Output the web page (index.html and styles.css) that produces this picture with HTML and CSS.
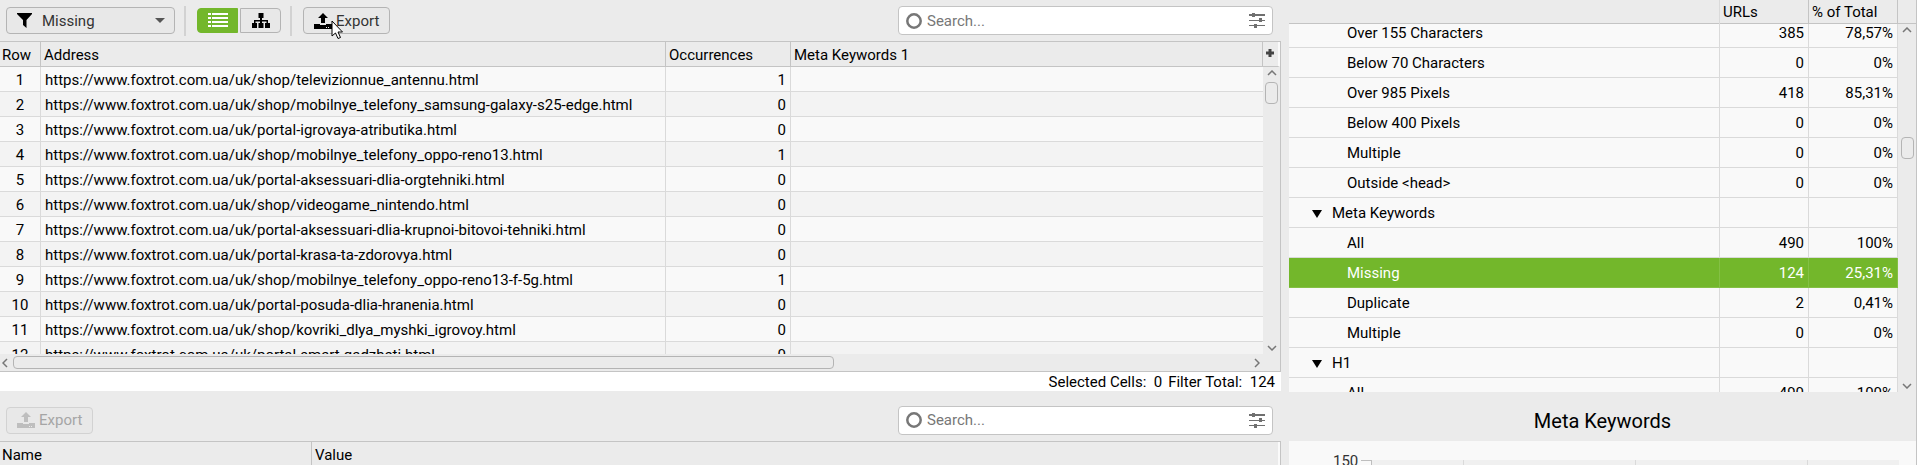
FILE: index.html
```html
<!DOCTYPE html>
<html lang="en">
<head>
    <meta charset="UTF-8">
    <meta name="viewport" content="width=device-width, initial-scale=1.0">
    <title>Meta Keywords</title>
    <link rel="stylesheet" href="styles.css">
</head>
<body>
    <svg class="symbols" aria-hidden="true">
        <symbol id="icon-export" viewBox="0 0 18 16">
            <path d="M9 0l5 5h-3v5H7V5H4z"/>
            <path d="M0 11h6v1h6v-1h6v5H0z"/>
            <path class="dot" d="M12 14h1v1h-1zM14 14h1v1h-1z"/>
        </symbol>
        <symbol id="icon-ring" viewBox="0 0 16 16">
            <circle cx="8" cy="8" r="6.700" fill="none" stroke="#777" stroke-width="2.500"/>
        </symbol>
        <symbol id="icon-sliders" viewBox="0 0 16 15">
            <path d="M0 1h16v2H0zM0 7h16v1H0zM0 12h16v1H0z"/>
            <path d="M3 0h3v4H3zM10 5h3v4h-3zM5 11h3v4H5z"/>
        </symbol>
        <symbol id="icon-chevron" viewBox="0 0 10 6">
            <path d="M1 5l4-4 4 4" fill="none" stroke="#777" stroke-width="1.500"/>
        </symbol>
    </svg>

    <main class="left">
        <div class="toolbar">
            <button type="button" class="filter">
                <svg width="15" height="15" viewBox="0 0 15 15"><path d="M0 0h15v1l-5.500 6v8L6 12V7L0 1z"/></svg>
                <span>Missing</span>
                <i class="caret"></i>
            </button>
            <span class="divider"></span>
            <div class="views">
                <button type="button" class="view active" aria-label="List view">
                    <svg width="20" height="15" viewBox="0 0 20 15"><path fill="#fff" d="M0 0h3v2H0zM4 0h16v2H4zM0 4h3v2H0zM4 4h16v2H4zM0 8h3v2H0zM4 8h16v2H4zM0 12h3v2H0zM4 12h16v2H4z"/></svg>
                </button>
                <button type="button" class="view" aria-label="Tree view">
                    <svg width="18" height="15" viewBox="0 0 18 15"><path d="M6.500 0h5v5H10v2h6v3h2v5h-5v-5h1.500V8.500H10V10h1.500v5h-5v-5H8V8.500H3.500V10H5v5H0v-5h2V7h6V5H6.500z"/></svg>
                </button>
            </div>
            <span class="divider"></span>
            <button type="button" class="export">
                <svg width="18" height="16"><use href="#icon-export"/></svg>
                <span>Export</span>
                <svg class="cursor" width="13" height="20" viewBox="0 0 13 20"><path d="M1 1v15l3.500-3 2.500 5.500 2.500-1L7 12h4.500z" fill="#fff" stroke="#000"/></svg>
            </button>
            <label class="search">
                <svg width="16" height="16"><use href="#icon-ring"/></svg>
                <input type="text" placeholder="Search..." aria-label="Search URLs">
                <svg width="16" height="15"><use href="#icon-sliders"/></svg>
            </label>
        </div>

        <section class="grid">
            <div class="grid-body">
                <table class="urls">
                    <colgroup><col class="c-row"><col class="c-address"><col class="c-occ"><col></colgroup>
                    <thead>
                        <tr><th>Row</th><th>Address</th><th>Occurrences</th><th>Meta Keywords 1</th></tr>
                    </thead>
                    <tbody>
                        <tr><td>1</td><td>https://www.foxtrot.com.ua/uk/shop/televizionnue_antennu.html</td><td>1</td><td></td></tr>
                        <tr><td>2</td><td>https://www.foxtrot.com.ua/uk/shop/mobilnye_telefony_samsung-galaxy-s25-edge.html</td><td>0</td><td></td></tr>
                        <tr><td>3</td><td>https://www.foxtrot.com.ua/uk/portal-igrovaya-atributika.html</td><td>0</td><td></td></tr>
                        <tr><td>4</td><td>https://www.foxtrot.com.ua/uk/shop/mobilnye_telefony_oppo-reno13.html</td><td>1</td><td></td></tr>
                        <tr><td>5</td><td>https://www.foxtrot.com.ua/uk/portal-aksessuari-dlia-orgtehniki.html</td><td>0</td><td></td></tr>
                        <tr><td>6</td><td>https://www.foxtrot.com.ua/uk/shop/videogame_nintendo.html</td><td>0</td><td></td></tr>
                        <tr><td>7</td><td>https://www.foxtrot.com.ua/uk/portal-aksessuari-dlia-krupnoi-bitovoi-tehniki.html</td><td>0</td><td></td></tr>
                        <tr><td>8</td><td>https://www.foxtrot.com.ua/uk/portal-krasa-ta-zdorovya.html</td><td>0</td><td></td></tr>
                        <tr><td>9</td><td>https://www.foxtrot.com.ua/uk/shop/mobilnye_telefony_oppo-reno13-f-5g.html</td><td>1</td><td></td></tr>
                        <tr><td>10</td><td>https://www.foxtrot.com.ua/uk/portal-posuda-dlia-hranenia.html</td><td>0</td><td></td></tr>
                        <tr><td>11</td><td>https://www.foxtrot.com.ua/uk/shop/kovriki_dlya_myshki_igrovoy.html</td><td>0</td><td></td></tr>
                        <tr><td>12</td><td>https://www.foxtrot.com.ua/uk/portal-smart-gadzheti.html</td><td>0</td><td></td></tr>
                    </tbody>
                </table>
            </div>
            <div class="grid-side">
                <button type="button" class="add" aria-label="Add column">
                    <svg width="8" height="8" viewBox="0 0 8 8"><path d="M2.500 0h3v2.500H8v3H5.500V8h-3V5.500H0v-3h2.500z" fill="#444"/></svg>
                </button>
                <div class="vscroll">
                    <svg width="10" height="6"><use href="#icon-chevron"/></svg>
                    <i class="thumb"></i>
                    <svg class="down" width="10" height="6"><use href="#icon-chevron"/></svg>
                </div>
            </div>
            <div class="hscroll">
                <svg class="prev" width="10" height="6"><use href="#icon-chevron"/></svg>
                <div class="track"><i class="bar"></i></div>
                <svg class="next" width="10" height="6"><use href="#icon-chevron"/></svg>
            </div>
        </section>

        <div class="status"><span>Selected Cells:&nbsp; 0</span><span>Filter Total:&nbsp; 124</span></div>

        <div class="toolbar lower">
            <button type="button" class="export" disabled>
                <svg width="18" height="16"><use href="#icon-export"/></svg>
                <span>Export</span>
            </button>
            <label class="search">
                <svg width="16" height="16"><use href="#icon-ring"/></svg>
                <input type="text" placeholder="Search..." aria-label="Search details">
                <svg width="16" height="15"><use href="#icon-sliders"/></svg>
            </label>
        </div>
        <table class="details">
            <thead><tr><th>Name</th><th>Value</th></tr></thead>
        </table>
    </main>

    <aside class="right">
        <section class="overview">
            <div class="head"><span></span><span>URLs</span><span>% of Total</span><span></span></div>
            <div class="overview-body">
                <div class="clip">
                    <table class="issues">
                        <colgroup><col><col class="c-num"><col class="c-num"></colgroup>
                        <tbody>
                            <tr><td>Over 155 Characters</td><td>385</td><td>78,57%</td></tr>
                            <tr><td>Below 70 Characters</td><td>0</td><td>0%</td></tr>
                            <tr><td>Over 985 Pixels</td><td>418</td><td>85,31%</td></tr>
                            <tr><td>Below 400 Pixels</td><td>0</td><td>0%</td></tr>
                            <tr><td>Multiple</td><td>0</td><td>0%</td></tr>
                            <tr><td>Outside &lt;head&gt;</td><td>0</td><td>0%</td></tr>
                            <tr class="group"><td><i class="open"></i>Meta Keywords</td><td></td><td></td></tr>
                            <tr><td>All</td><td>490</td><td>100%</td></tr>
                            <tr class="selected"><td>Missing</td><td>124</td><td>25,31%</td></tr>
                            <tr><td>Duplicate</td><td>2</td><td>0,41%</td></tr>
                            <tr><td>Multiple</td><td>0</td><td>0%</td></tr>
                            <tr class="group"><td><i class="open"></i>H1</td><td></td><td></td></tr>
                            <tr><td>All</td><td>490</td><td>100%</td></tr>
                        </tbody>
                    </table>
                </div>
                <div class="vscroll">
                    <svg width="10" height="6"><use href="#icon-chevron"/></svg>
                    <i class="thumb"></i>
                    <svg class="down" width="10" height="6"><use href="#icon-chevron"/></svg>
                </div>
            </div>
        </section>
        <h2>Meta Keywords</h2>
        <div class="chart">
            <span class="tick">150</span>
            <i class="axis"></i>
            <div class="plot"><i></i><i></i><i></i></div>
        </div>
    </aside>
</body>
</html>
```

FILE: styles.css
```css
* {
    box-sizing: border-box;
}

body {
    margin: 0;
    height: 100vh;
    display: flex;
    gap: 8px;
    overflow: hidden;
    background: #ebebeb;
    color: #000;
    font: 15px/24px Roboto, sans-serif;
}

button, input {
    font: inherit;
}

svg {
    display: block;
    flex: none;
}

.symbols {
    position: absolute;
    width: 0;
    height: 0;
}

.dot {
    fill: #ebebeb;
}

.left {
    flex: 1;
    min-width: 0;
}

.right {
    width: 628px;
    flex: none;
    border-right: 1px solid #c4c4c4;
}

/* toolbars */
.toolbar {
    height: 41px;
    padding: 0 8px 0 6px;
    display: flex;
    align-items: center;
}

.toolbar.lower {
    height: 50px;
    padding-top: 8px;
}

.toolbar button {
    display: flex;
    align-items: center;
    background: #e8e8e8;
    border: 1px solid #b4b4b4;
    border-radius: 4px;
    color: #333;
}

.toolbar .filter {
    width: 169px;
    height: 27px;
    padding: 0 9px 0 10px;
    gap: 10px;
}

.caret {
    margin-left: auto;
    border: 5px solid transparent;
    border-top-color: #555;
    border-bottom: 0;
}

.divider {
    width: 2px;
    height: 30px;
    margin: 0 11px 0 9px;
    background: #d2d2d2;
}

.views {
    display: flex;
    gap: 2px;
}

.toolbar .view {
    width: 41px;
    height: 25px;
    padding: 0;
    justify-content: center;
    border-radius: 0 4px 4px 0;
}

.toolbar .view.active {
    background: #73b72b;
    border-color: #73b72b;
    border-radius: 4px 0 0 4px;
}

.toolbar .export {
    position: relative;
    width: 87px;
    height: 27px;
    padding: 0 0 0 10px;
    gap: 4px;
}

.toolbar .export:disabled {
    border-color: #d2d2d2;
    color: #a5a5a5;
    fill: #bebebe;
}

.cursor {
    position: absolute;
    left: 27px;
    top: 12px;
}

.search {
    width: 375px;
    height: 29px;
    margin-left: auto;
    padding: 0 7px;
    display: flex;
    align-items: center;
    gap: 5px;
    background: #fff;
    border: 1px solid #c4c4c4;
    border-radius: 4px;
    fill: #707070;
}

.search input {
    flex: 1;
    min-width: 0;
    padding: 0;
    border: 0;
    outline: 0;
    background: none;
}

.search input::placeholder {
    color: #777;
}

/* tables */
table {
    width: 100%;
    border-collapse: separate;
    border-spacing: 0;
    table-layout: fixed;
}

th {
    height: 25px;
    padding: 2px 0 0 3px;
    line-height: 22px;
    font-weight: 400;
    text-align: left;
    border-right: 1px solid #c4c4c4;
    border-bottom: 1px solid #c4c4c4;
}

th:first-child {
    padding-left: 2px;
}

td {
    padding: 0 4px;
    white-space: nowrap;
    border-right: 1px solid #dadada;
    border-bottom: 1px solid #dadada;
}

.grid {
    height: 331px;
    display: grid;
    grid-template-columns: 1fr 17px;
    grid-template-rows: 1fr 17px;
    border: solid #c4c4c4;
    border-width: 1px 1px 1px 0;
}

.grid-body {
    overflow: hidden;
}

.urls td {
    height: 25px;
    padding-top: 2px;
    line-height: 22px;
    background: #f9f9f9;
}

.urls tr:nth-child(even) td {
    background: #f3f3f3;
}

.urls td:first-child {
    text-align: center;
}

.urls td:nth-child(3) {
    text-align: right;
}

.urls td:last-child {
    border-right: 0;
}

.c-row {
    width: 41px;
}

.c-address {
    width: 625px;
}

.c-occ {
    width: 125px;
}

.c-num {
    width: 89px;
}

.grid-side {
    display: flex;
    flex-direction: column;
}

.add {
    height: 25px;
    padding: 0 2px 2px 0;
    display: flex;
    align-items: center;
    justify-content: center;
    background: none;
    border: 0;
    border-right: 2px solid #fafafa;
    border-bottom: 1px solid #c4c4c4;
}

.vscroll {
    flex: 1;
    display: flex;
    flex-direction: column;
    align-items: center;
    padding: 3px 0;
}

.vscroll .thumb {
    width: 13px;
    height: 22px;
    margin-top: 6px;
    border: 1px solid #b4b4b4;
    border-radius: 4px;
}

.down {
    margin-top: auto;
    transform: rotate(180deg);
}

.hscroll {
    grid-column: 1 / -1;
    display: flex;
    align-items: center;
    padding-right: 18px;
}

.track {
    flex: 1;
    margin: 0 4px 0 3px;
}

.bar {
    display: block;
    width: 66.5%;
    height: 13px;
    border: 1px solid #b4b4b4;
    border-radius: 4px;
}

.prev {
    transform: rotate(-90deg);
}

.next {
    transform: rotate(90deg);
}

.status {
    height: 19px;
    padding-right: 6px;
    display: flex;
    justify-content: flex-end;
    gap: 6px;
    background: #fff;
    line-height: 21px;
}

.details {
    border-top: 1px solid #c4c4c4;
    border-right: 1px solid #c4c4c4;
}

.details th:first-child {
    width: 312px;
}

.details th:last-child {
    border-right: 2px solid #fafafa;
}

/* overview */
.head {
    height: 24px;
    display: grid;
    grid-template-columns: 1fr 89px 89px 18px;
    border-bottom: 1px solid #c4c4c4;
}

.head span {
    padding-left: 3px;
    border-right: 1px solid #c4c4c4;
}

.head span:first-child {
    border-right-color: #dadada;
}

.head span:last-child {
    border-right: 0;
}

.overview-body {
    height: 368px;
    display: flex;
}

.clip {
    flex: 1;
    overflow: hidden;
    display: flex;
    flex-direction: column;
}

.overview-body .vscroll {
    flex: none;
    width: 18px;
}

.overview-body .thumb {
    margin-top: 104px;
}

.issues td {
    height: 30px;
    background: #f9f9f9;
    text-align: right;
}

/* the list is scrolled a little, so its first row is cut */
.issues {
    margin-top: -6px;
}

.issues td:first-child {
    padding-left: 58px;
    text-align: left;
}

.issues .group td:first-child {
    padding-left: 23px;
}

.open {
    display: inline-block;
    margin-right: 10px;
    border: 5px solid transparent;
    border-top: 8px solid #000;
    border-bottom: 0;
}

.issues .selected td {
    background: #73b72b;
    border-color: #84c044;
    color: #fff;
}

h2 {
    height: 49px;
    margin: 0;
    font-size: 20px;
    line-height: 58px;
    font-weight: 400;
    text-align: center;
}

/* chart */
.chart {
    height: 40px;
    padding: 19px 17px 0 44px;
    display: flex;
    background: #f9f9f9;
}

.tick {
    width: 28px;
    height: 1px;
    line-height: 3px;
    color: #333;
}

.axis {
    width: 11px;
    border: solid #bebebe;
    border-width: 1px 1px 0 0;
}

.plot {
    flex: 1;
    display: grid;
    grid-template-columns: 92px 172px 172px;
    background: #f0f0f0;
}

.plot i {
    border-right: 1px solid #dadada;
}
```
